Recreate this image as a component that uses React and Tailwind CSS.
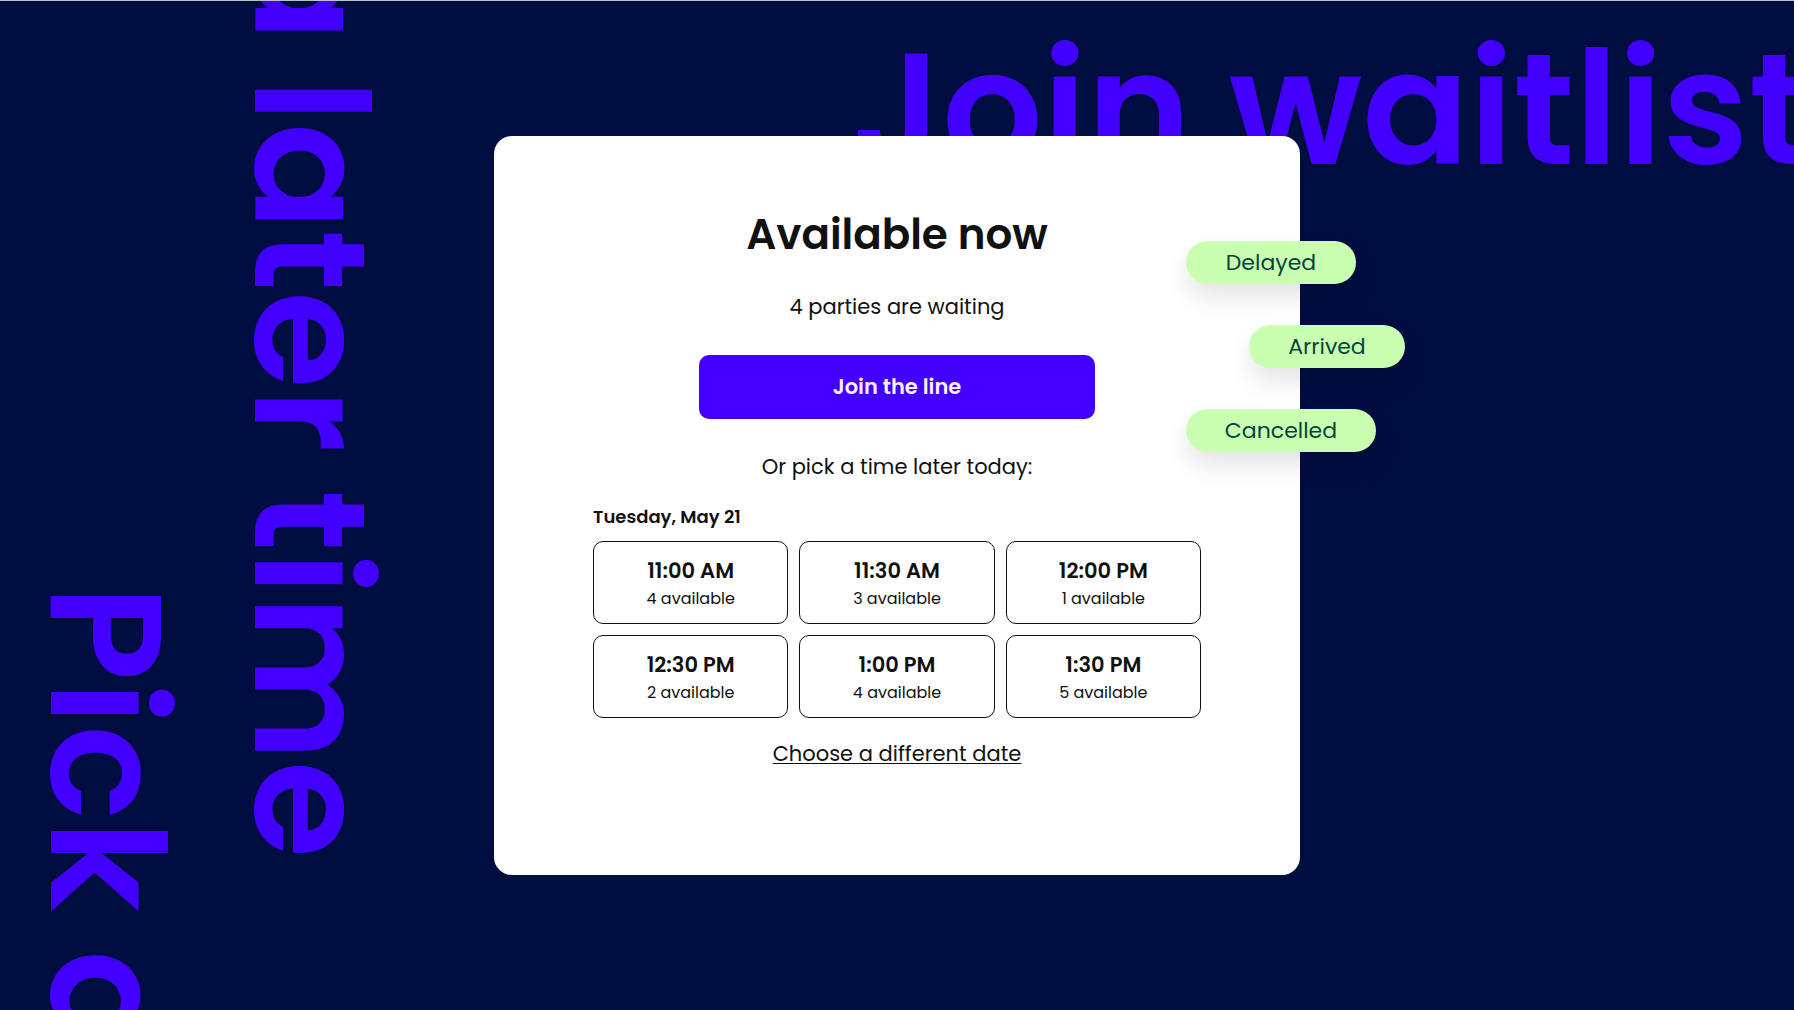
const slots = [
  { time: '11:00 AM', available: 4 },
  { time: '11:30 AM', available: 3 },
  { time: '12:00 PM', available: 1 },
  { time: '12:30 PM', available: 2 },
  { time: '1:00 PM', available: 4 },
  { time: '1:30 PM', available: 5 },
];

const statuses = [
  { name: 'Delayed', className: 'w-[170px]' },
  { name: 'Arrived', className: 'w-[156px] ml-[63px]' },
  { name: 'Cancelled', className: 'w-[190px]' },
];

function SlotButton({ time, available }) {
  return (
    <button
      type="button"
      className="flex h-[83px] flex-col items-center justify-center rounded-[10px] border border-[#111] bg-white pt-1"
    >
      <span className="text-[21px] leading-7 font-semibold">{time}</span>
      <span className="text-[16px] leading-7">{available} available</span>
    </button>
  );
}

function StatusPills() {
  return (
    <ul className="absolute top-[105px] left-[692px] flex flex-col gap-[41px] text-[22px] leading-[43px] text-[#00463f]">
      {statuses.map((status) => (
        <li
          key={status.name}
          className={`rounded-full bg-[#caffb1] text-center shadow-[0_14px_24px_rgba(0,0,0,0.1)] ${status.className}`}
        >
          {status.name}
        </li>
      ))}
    </ul>
  );
}

function Backdrop() {
  return (
    <div className="absolute inset-0 overflow-hidden whitespace-nowrap text-[158px] leading-[204px] font-semibold text-[#4200ff]">
      <p className="absolute top-[584px] left-1 [writing-mode:vertical-rl]">Pick a</p>
      <p className="absolute bottom-[152px] left-52 [writing-mode:vertical-rl]">a later time</p>
      <p className="absolute top-1.5 left-[852px]">Join waitlist</p>
    </div>
  );
}

export default function App() {
  return (
    <main className="relative flex min-h-screen items-center justify-center border-t border-[#b9c0cc] bg-[#000d40] font-['Poppins','Inter',sans-serif] text-[#111]">
      <Backdrop />

      <section className="relative w-full max-w-[806px] rounded-[18px] bg-white pt-[75px] pb-[105px] text-center">
        <h1 className="text-[42px] leading-[48px] font-semibold">Available now</h1>
        <p className="mt-8 text-[21px] leading-8">4 parties are waiting</p>
        <button
          type="button"
          className="mt-8 h-16 w-[396px] rounded-[10px] bg-[#4200ff] text-[21px] font-semibold text-[#ffeefa]"
        >
          Join the line
        </button>
        <p className="mt-8 text-[21px] leading-8">Or pick a time later today:</p>

        <div className="mx-auto w-[608px]">
          <h2 className="mt-5 text-left text-[18px] leading-7 font-semibold">Tuesday, May 21</h2>
          <div className="mt-[10px] grid grid-cols-3 gap-[11px]">
            {slots.map((slot) => (
              <SlotButton key={slot.time} time={slot.time} available={slot.available} />
            ))}
          </div>
        </div>

        <a href="#" className="mt-5 inline-block text-[21px] leading-8 underline decoration-1 underline-offset-2">
          Choose a different date
        </a>

        <StatusPills />
      </section>
    </main>
  );
}
